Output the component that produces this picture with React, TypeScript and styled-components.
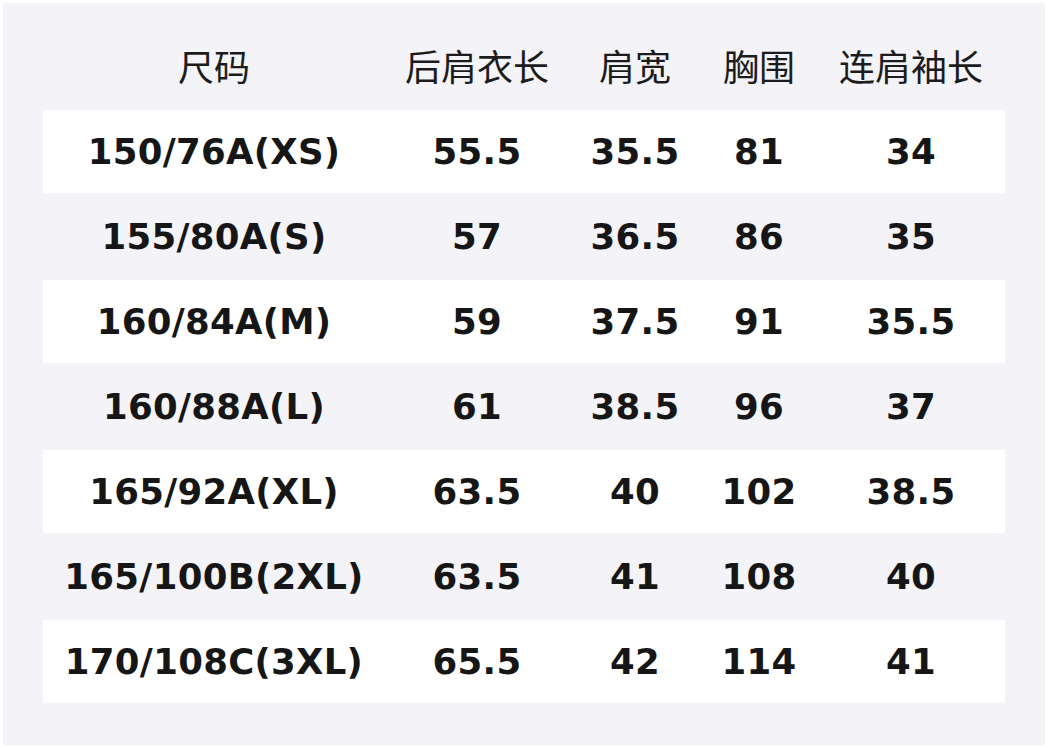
import { createGlobalStyle, styled } from 'styled-components'

const GlobalStyle = createGlobalStyle`
  html, body {
    margin: 0;
    padding: 0;
    background: #ffffff;
  }
`

const Page = styled.div`
  width: 1048px;
  height: 748px;
  padding: 3px;
  box-sizing: border-box;
  background: #ffffff;
`

const Panel = styled.div`
  width: 1042px;
  height: 742px;
  background: #f3f3f8;
  padding: 26px 40px 0 40px;
  box-sizing: border-box;
  display: flex;
  flex-direction: column;
  gap: 2px;
`

const Row = styled.div<{ $white?: boolean; $head?: boolean }>`
  display: grid;
  grid-template-columns: 342px 184px 132px 116px 188px;
  height: ${(p) => (p.$head ? '79px' : '83px')};
  align-items: center;
  background: ${(p) => (p.$white ? '#ffffff' : 'transparent')};
`

const HeadCell = styled.div`
  text-align: center;
  font-family: 'Noto Sans CJK SC', 'DejaVu Sans', sans-serif;
  font-size: 36px;
  font-weight: 400;
  color: #1c1c1c;
  padding-bottom: 7px;
`

const Cell = styled.div`
  text-align: center;
  font-family: 'DejaVu Sans', sans-serif;
  font-size: 35.5px;
  font-weight: 700;
  color: #161616;
  letter-spacing: 0.3px;
`

const headers = ['尺码', '后肩衣长', '肩宽', '胸围', '连肩袖长']

const rows = [
  ['150/76A(XS)', '55.5', '35.5', '81', '34'],
  ['155/80A(S)', '57', '36.5', '86', '35'],
  ['160/84A(M)', '59', '37.5', '91', '35.5'],
  ['160/88A(L)', '61', '38.5', '96', '37'],
  ['165/92A(XL)', '63.5', '40', '102', '38.5'],
  ['165/100B(2XL)', '63.5', '41', '108', '40'],
  ['170/108C(3XL)', '65.5', '42', '114', '41'],
]

export default function App() {
  return (
    <>
      <GlobalStyle />
      <Page>
        <Panel>
          <Row $head>
            {headers.map((h) => (
              <HeadCell key={h}>{h}</HeadCell>
            ))}
          </Row>
          {rows.map((r, i) => (
            <Row key={r[0]} $white={i % 2 === 0}>
              {r.map((v, j) => (
                <Cell key={j}>{v}</Cell>
              ))}
            </Row>
          ))}
        </Panel>
      </Page>
    </>
  )
}
